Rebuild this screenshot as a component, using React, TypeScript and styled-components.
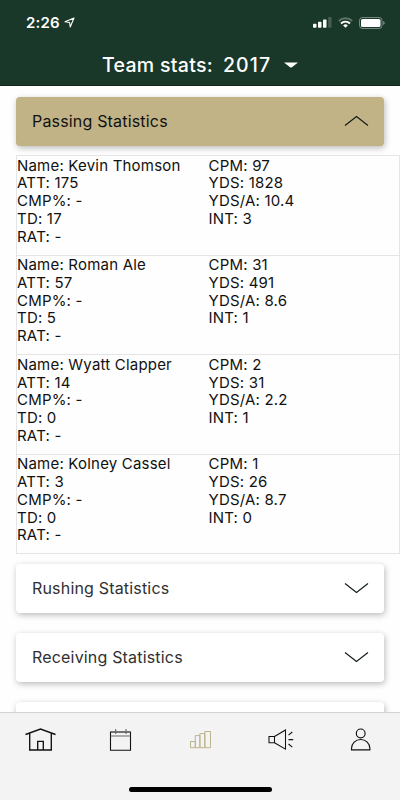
import React from "react";
import styled, { createGlobalStyle } from "styled-components";

const GlobalStyle = createGlobalStyle`
  * { box-sizing: border-box; }
  body { margin: 0; background: #fefefe; }
`;

const Screen = styled.div`
  width: 400px;
  height: 800px;
  display: flex;
  flex-direction: column;
  overflow: hidden;
  background: #fefefe;
  color: #111;
  font-family: Inter, "Liberation Sans", sans-serif;
`;

const Header = styled.header`
  flex: none;
  height: 86px;
  background: #193829;
  border-bottom: 1px solid #10291c;
  color: #fff;
`;

const StatusBar = styled.div`
  height: 44px;
  padding: 1px 15px 0 26px;
  display: flex;
  align-items: center;
  justify-content: space-between;
`;

const Clock = styled.div`
  display: flex;
  align-items: center;
  gap: 4px;
  font-size: 15px;
  font-weight: 600;
  letter-spacing: 0.15px;
`;

const StatusIcons = styled.div`
  display: flex;
  align-items: center;
  gap: 6px;
  svg { display: block; }
`;

const TitleRow = styled.button`
  display: flex;
  align-items: center;
  width: 100%;
  height: 42px;
  padding: 0 0 0 102px;
  border: 0;
  background: none;
  color: #fff;
  font: 500 19.5px/42px Inter, sans-serif;
  white-space: pre;
`;

const TitleText = styled.span<{ $width: number; $spacing: number }>`
  width: ${(p) => p.$width}px;
  letter-spacing: ${(p) => p.$spacing}px;
  text-align: left;
`;

const Content = styled.main`
  flex: 1;
  min-height: 0;
  overflow: hidden;
  padding: 11px 0 0 16px;
`;

const SectionHeader = styled.button<{ $open?: boolean }>`
  display: flex;
  align-items: center;
  justify-content: space-between;
  width: 368px;
  height: 49px;
  margin-bottom: ${(p) => (p.$open ? 9 : 20)}px;
  padding: 0 15px 1px 16px;
  border: 0;
  border-radius: 4px;
  background: ${(p) => (p.$open ? "#c1b385" : "#fff")};
  color: ${(p) => (p.$open ? "#111" : "#303030")};
  box-shadow: 1px 2px 6px rgba(0, 0, 0, 0.27);
  font: 400 16px/20px Inter, sans-serif;
  letter-spacing: 0.18px;
  svg { display: block; }
`;

const PlayerList = styled.div`
  width: 384px;
  height: 399px;
  margin-bottom: 10px;
  border: 1px solid #e5e5e5;
  border-top-width: 0;
`;

const Player = styled.div`
  display: grid;
  grid-template-columns: 191.5px 1fr;
  height: 99.6px;
  border-top: 1px solid #e5e5e5;
  font-size: 15px;
  line-height: 17.7px;
  letter-spacing: 0.2px;
`;

const Column = styled.div`
  padding-top: 0.7px;
`;

const TabBar = styled.nav`
  flex: none;
  height: 88px;
  background: #f3f3f3;
  border-top: 1px solid #d2d2d2;
`;

const Tabs = styled.div`
  display: grid;
  grid-template-columns: repeat(5, 1fr);
  height: 74px;
`;

const Tab = styled.button<{ $active?: boolean }>`
  display: flex;
  justify-content: center;
  padding: 12px 0 0;
  border: 0;
  background: none;
  color: ${(p) => (p.$active ? "#bdb38c" : "#111")};
`;

const HomeIndicator = styled.div`
  width: 143px;
  height: 5px;
  margin: 0 auto;
  border-radius: 3px;
  background: #000;
`;

const Chevron = ({ up = false }: { up?: boolean }) => (
  <svg width="25" height="12" viewBox="0 0 25 12" fill="none" stroke="#111b1b" strokeWidth="1.15">
    <path d={up ? "M1 10.5 12.5 1.5 24 10.5" : "M1 1.5 12.5 10.5 24 1.5"} />
  </svg>
);

const tabIcons = [
  <path key="home" strokeWidth="1.35" d="M.5 9.5 15.5 4l15 5.5M4.7 8v17h21.6V8M12.7 25v-8.7h5.6V25" />,
  <g key="calendar">
    <path strokeWidth="1.1" d="M5.5 7h20v18.3h-20z" />
    <path stroke="#666" strokeWidth="1.1" d="M5.5 11h20M5.5 7h20M10.7 4v5M21 4v5" />
  </g>,
  <path key="stats" strokeWidth="1" d="M5.5 16.5h4.8v6.2H5.5zM10.3 22.7V10.6h4.6v12.1zM14.9 22.7V8.6h4.9v14.1zM19.8 22.7V6.5h5.7v16.2z" />,
  <path key="news" strokeWidth="1.05" d="M4 11.5h5.5v6.2H4zM9.5 11.5 20.5 5v19.2l-11-6.5M23.5 10.2l3.8-3.2M23.5 14.6h4.7M23.5 19l3.8 3.2" />,
  <g key="profile" strokeWidth="1.15">
    <circle cx="15.7" cy="8.4" r="4.4" />
    <path d="M6.5 24.8v-1.3a9.2 9 0 0 1 18.4 0v1.3z" />
  </g>,
];

const players = [
  { name: "Kevin Thomson", att: 175, td: 17, cpm: 97, yds: 1828, avg: 10.4, int: 3 },
  { name: "Roman Ale", att: 57, td: 5, cpm: 31, yds: 491, avg: 8.6, int: 1 },
  { name: "Wyatt Clapper", att: 14, td: 0, cpm: 2, yds: 31, avg: 2.2, int: 1 },
  { name: "Kolney Cassel", att: 3, td: 0, cpm: 1, yds: 26, avg: 8.7, int: 0 },
];

export default function App() {
  return (
    <Screen>
      <GlobalStyle />
      <Header>
        <StatusBar>
          <Clock>
            2:26
            <svg width="11" height="11" viewBox="0 0 11 11" fill="none" stroke="#fff" strokeWidth="1.1" strokeLinejoin="round">
              <path d="M10 1 1 4.8 5.6 5.5 6.2 10z" />
            </svg>
          </Clock>
          <StatusIcons>
            <svg width="19" height="11" viewBox="0 0 19 11" fill="#fff">
              <rect x="0" y="6.8" width="3.5" height="4" rx=".8" />
              <rect x="5" y="4.8" width="3.5" height="6" rx=".8" />
              <rect x="10" y="2.5" width="3.5" height="8.3" rx=".8" />
              <rect x="15.2" y="0" width="3.3" height="10.8" rx=".8" opacity=".2" />
            </svg>
            <svg width="15" height="11" viewBox="0 0 15 11" fill="none" stroke="#fff" strokeWidth="1.9">
              <path opacity=".3" d="M.8 4a9.6 9.6 0 0 1 13.4 0" />
              <path d="M3 6.5a6.4 6.4 0 0 1 9 0" />
              <path fill="#fff" stroke="none" d="M5.2 8.4a3.3 3.3 0 0 1 4.6 0L7.5 10.8z" />
            </svg>
            <svg width="26" height="12" viewBox="0 0 26 12">
              <rect x=".5" y=".5" width="22.5" height="11" rx="3" fill="none" stroke="#fff" opacity=".4" />
              <rect x="2" y="2" width="19.5" height="8" rx="1.6" fill="#fff" />
              <path d="M24.2 4v4q1.5-.7 1.5-2t-1.5-2z" fill="#fff" opacity=".45" />
            </svg>
          </StatusIcons>
        </StatusBar>
        <TitleRow>
          <TitleText $width={121} $spacing={0.3}>Team stats:</TitleText>
          <TitleText $width={61} $spacing={1.1}>2017</TitleText>
          <svg width="14" height="6" viewBox="0 0 14 6" fill="#fff">
            <path d="M0 .4h14L8.2 5q-1.2 1-2.4 0z" />
          </svg>
        </TitleRow>
      </Header>
      <Content>
        <SectionHeader $open>
          Passing Statistics
          <Chevron up />
        </SectionHeader>
        <PlayerList>
          {players.map((p) => (
            <Player key={p.name}>
              <Column>
                <div>Name: {p.name}</div>
                <div>ATT: {p.att}</div>
                <div>CMP%: -</div>
                <div>TD: {p.td}</div>
                <div>RAT: -</div>
              </Column>
              <Column>
                <div>CPM: {p.cpm}</div>
                <div>YDS: {p.yds}</div>
                <div>YDS/A: {p.avg}</div>
                <div>INT: {p.int}</div>
              </Column>
            </Player>
          ))}
        </PlayerList>
        <SectionHeader>
          Rushing Statistics
          <Chevron />
        </SectionHeader>
        <SectionHeader>
          Receiving Statistics
          <Chevron />
        </SectionHeader>
        <SectionHeader />
      </Content>
      <TabBar>
        <Tabs>
          {tabIcons.map((icon) => (
            <Tab key={icon.key} $active={icon.key === "stats"} aria-label={String(icon.key)}>
              <svg width="31" height="28" viewBox="0 0 31 28" fill="none" stroke="currentColor">
                {icon}
              </svg>
            </Tab>
          ))}
        </Tabs>
        <HomeIndicator />
      </TabBar>
    </Screen>
  );
}
